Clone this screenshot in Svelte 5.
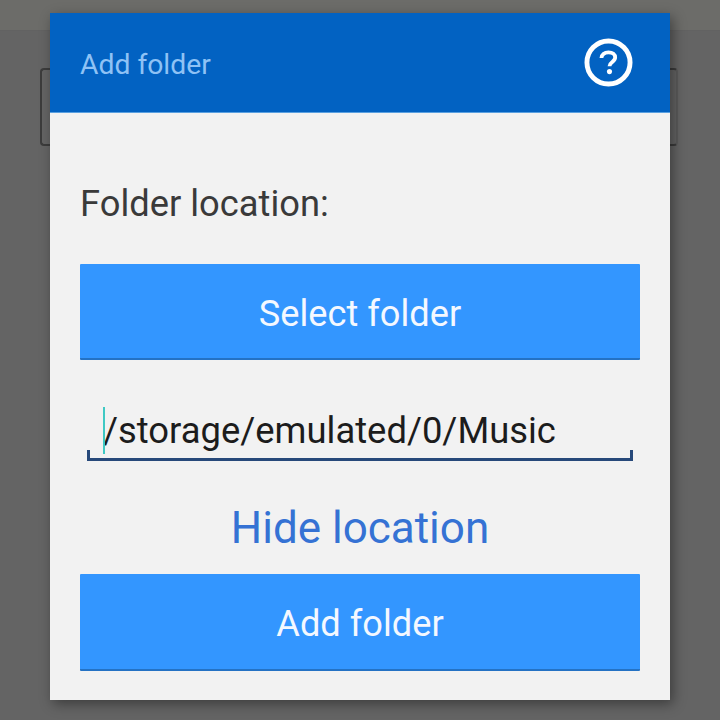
<script>
  let path = "/storage/emulated/0/Music";
</script>

<div class="screen">
  <div class="backdrop">
    <div class="topbar"></div>
    <div class="behind"></div>
  </div>

  <div class="dialog">
    <header class="head">
      <span class="title">Add folder</span>
      <svg class="help" viewBox="0 0 50 50" aria-label="Help">
        <circle cx="25" cy="25" r="22" fill="none" stroke="#fff" stroke-width="5" />
        <path d="M17.800 20.500c0-3.600 3-5.800 7.200-5.800s6.800 2.200 6.800 5.300c0 4.400-5.800 4.500-5.800 8.800" fill="none" stroke="#fff" stroke-width="3.900" />
        <circle cx="26" cy="34.300" r="2.600" fill="#fff" />
      </svg>
    </header>

    <div class="body">
      <p class="label">Folder location:</p>
      <button class="action select">Select folder</button>
      <div class="field">
        <i class="caret"></i>
        <span class="path">{path}</span>
      </div>
      <a class="toggle" href="#hide">Hide location</a>
      <button class="action add">Add folder</button>
    </div>
  </div>
</div>

<style>
  :global(body) {
    margin: 0;
    background: #646464;
    font-family: Roboto, "Liberation Sans", sans-serif;
  }

  .screen {
    position: relative;
    box-sizing: border-box;
    width: 720px;
    height: 720px;
    padding: 13px 50px 20px;
    overflow: hidden;
    background: #646464;
  }

  .backdrop {
    position: absolute;
    inset: 0;
  }

  .topbar {
    height: 30px;
    background: #6c6c69;
    border-bottom: 1px solid #626262;
  }

  .behind {
    position: absolute;
    left: 40px;
    top: 68px;
    width: 638px;
    height: 78px;
    box-sizing: border-box;
    border: 2px solid #3c3c3c;
    border-right-color: #5a5a5a;
    border-radius: 4px;
  }

  .dialog {
    position: relative;
    display: flex;
    flex-direction: column;
    height: 687px;
    background: #f2f2f2;
    box-shadow: 3px 4px 12px rgba(0, 0, 0, 0.4);
  }

  .head {
    display: flex;
    align-items: center;
    justify-content: space-between;
    box-sizing: border-box;
    height: 100px;
    padding: 4px 37px 0 30px;
    background: #0262c2;
    border-bottom: 1px solid #5aa0e0;
  }

  .title {
    font-size: 28.300px;
    color: #8fc2f5;
  }

  .help {
    width: 49px;
    height: 49px;
    margin-top: -4px;
  }

  .body {
    display: flex;
    flex-direction: column;
    padding: 0 30px;
  }

  .label {
    margin: 71px 0 0;
    height: 39px;
    font-size: 36.300px;
    line-height: 39px;
    color: #3a3a3a;
  }

  .action {
    display: block;
    width: 100%;
    height: 96px;
    border: 0;
    border-bottom: 2px solid #2472c4;
    border-radius: 1px;
    padding: 4px 0 0;
    background: #3396ff;
    color: #f4f8ff;
    font-family: inherit;
    font-size: 36.200px;
  }

  .select {
    margin-top: 41px;
  }

  .add {
    height: 97px;
  }

  .field {
    position: relative;
    box-sizing: border-box;
    height: 56px;
    margin: 45px 7px 0;
    padding-left: 16px;
    border-bottom: 3px solid #27497a;
    line-height: 52px;
  }

  .field::before,
  .field::after {
    content: "";
    position: absolute;
    bottom: 0;
    width: 3px;
    height: 8px;
    background: #27497a;
  }

  .field::before {
    left: 0;
  }

  .field::after {
    right: 0;
  }

  .caret {
    position: absolute;
    left: 16px;
    top: 2px;
    width: 2px;
    height: 47px;
    background: #3fc9c4;
  }

  .path {
    font-size: 36.400px;
    color: #1c1c1c;
  }

  .toggle {
    display: block;
    margin-top: 21px;
    height: 92px;
    font-size: 44px;
    line-height: 92px;
    text-align: center;
    text-decoration: none;
    color: #3572d4;
  }
</style>
